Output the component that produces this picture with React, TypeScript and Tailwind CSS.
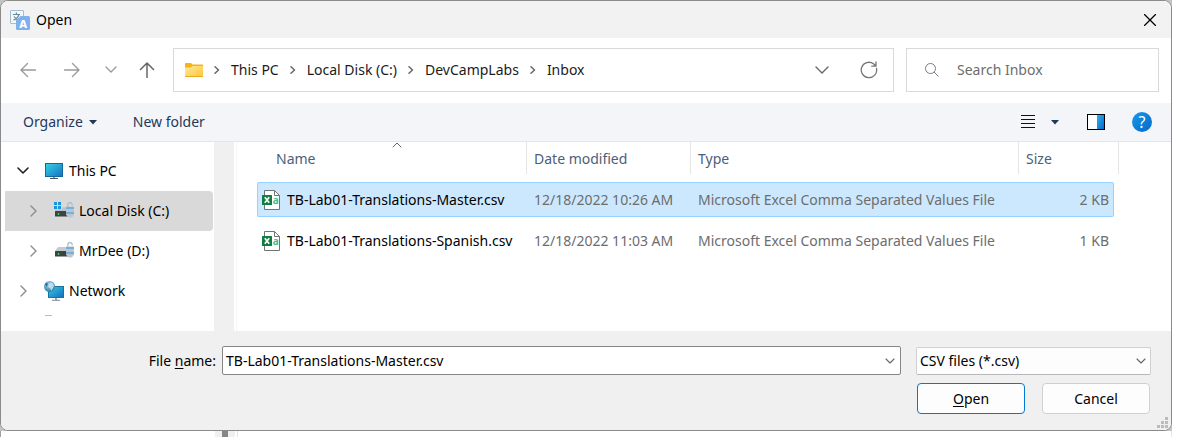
import React from "react";

type StrokeProps = { d: string; w?: number; h?: number; className?: string; stroke?: number };

function Stroke({ d, w = 12, h = 12, className = "", stroke = 1.4 }: StrokeProps) {
  return (
    <svg width={w} height={h} viewBox={`0 0 ${w} ${h}`} fill="none" stroke="currentColor" strokeWidth={stroke} strokeLinecap="round" strokeLinejoin="round" className={`shrink-0 ${className}`} aria-hidden="true">
      <path d={d} />
    </svg>
  );
}

function TranslateIcon() {
  return (
    <svg width="20" height="20" viewBox="0 0 20 20" className="shrink-0" aria-hidden="true">
      <rect x="0.5" y="0.5" width="13" height="13" rx="0.5" fill="#f1f7fb" stroke="#a4bccb" />
      <path d="M2.800 4.500h7.200M6.400 2.600v1.900M4 6.500c1 1.800 2.600 3 5 3.400M8.800 5c-.8 2.600-2.500 4-5.300 4.800" fill="none" stroke="#6a8799" strokeWidth="1.200" />
      <path d="M10.500 6h8a1.500 1.500 0 0 1 1.500 1.500v11a1.500 1.500 0 0 1-1.500 1.500h-11A1.500 1.500 0 0 1 6 18.500V10.500z" fill="#7fb0ee" />
      <text x="13.200" y="17.500" textAnchor="middle" fontSize="11" fontWeight="800" fontFamily="Noto Sans" fill="#fff">A</text>
    </svg>
  );
}

function FolderIcon() {
  return (
    <svg width="18" height="14" viewBox="0 0 18 14" className="shrink-0" aria-hidden="true">
      <defs>
        <linearGradient id="folder" x1="0" y1="0" x2="1" y2="1">
          <stop offset="0" stopColor="#ffe8a0" />
          <stop offset="1" stopColor="#fdc733" />
        </linearGradient>
      </defs>
      <path d="M0 1a1 1 0 0 1 1-1h5l1.500 1.500H17a1 1 0 0 1 1 1v3H0z" fill="#f5b316" />
      <path d="M0 4.500h5.500l2-1.500H17a1 1 0 0 1 1 1v9a1 1 0 0 1-1 1H1a1 1 0 0 1-1-1z" fill="url(#folder)" />
      <path d="M.3 13.500h17.400" stroke="#e8a91c" />
    </svg>
  );
}

function MonitorIcon() {
  return (
    <svg width="18" height="16" viewBox="0 0 18 16" className="shrink-0" aria-hidden="true">
      <defs>
        <linearGradient id="screen" x1="0" y1="0" x2="1" y2="1">
          <stop offset="0" stopColor="#35d5e4" />
          <stop offset="1" stopColor="#1570c4" />
        </linearGradient>
      </defs>
      <rect x="0.500" y="0.500" width="17" height="13" fill="url(#screen)" stroke="#14679c" />
      <path d="M8 14h2v1.500H8z" fill="#8b98a5" />
      <path d="M5 15.500h8" stroke="#4a5865" />
    </svg>
  );
}

function DriveIcon({ system = false }: { system?: boolean }) {
  return (
    <svg width="20" height="18" viewBox="0 0 20 18" className="shrink-0" aria-hidden="true">
      {system && <path d="M0 0h3v3H0zM4 0h3v3H4zM0 4h3v3H0zM4 4h3v3H4z" fill="#1a93dc" />}
      {system ? <path d="M8 5.500h6V9H1V7.500h7z" fill="#bcc2c7" /> : <path d="M4 5h10v4H1z" fill="#c5cace" />}
      <rect x="1" y="9" width="13" height="5.500" rx="0.500" fill="#3c4144" />
      <circle cx="4.500" cy="12" r="0.900" fill="#38e04b" />
      <path d="M13.800 4.500V2.700a2.200 2.200 0 0 1 4.400 0V3.500" fill="none" stroke="#a9bdcb" strokeWidth="1.300" />
      <path d="M12 4.500h8v8q-1 2.800-4 3.300-3-.5-4-3.300z" fill="#bac6d1" />
      <path d="M12 6h8M12 11h8" stroke="#3697dd" strokeWidth="1.100" />
    </svg>
  );
}

function NetworkIcon() {
  return (
    <svg width="20" height="20" viewBox="0 0 20 20" className="shrink-0" aria-hidden="true">
      <defs>
        <linearGradient id="netscreen" x1="0" y1="0" x2="1" y2="1">
          <stop offset="0" stopColor="#35cfe4" />
          <stop offset="1" stopColor="#146dbd" />
        </linearGradient>
        <radialGradient id="globe" cx="0.400" cy="0.300" r="0.700">
          <stop offset="0" stopColor="#a7d3e8" />
          <stop offset="1" stopColor="#2d7fae" />
        </radialGradient>
      </defs>
      <rect x="4.500" y="5.500" width="15" height="11" fill="url(#netscreen)" stroke="#1572a5" />
      <path d="M11 17h2v2h-2z" fill="#9aa6b0" />
      <path d="M8 19.300h8" stroke="#7f8b96" />
      <circle cx="5.500" cy="5.500" r="5.500" fill="url(#globe)" />
      <path d="M6 1.500l3 .5 1 3-1.500 3-1 2-1.500-3-2-1 1-2z" fill="#dcebf2" opacity="0.750" />
      <path d="M1 3l2-1.500 1 1.500-1.500 3z" fill="#2a7398" />
    </svg>
  );
}

function CsvIcon() {
  return (
    <svg width="18" height="20" viewBox="0 0 18 20" className="shrink-0" aria-hidden="true">
      <path d="M2.500.5h10l5 5v14h-15z" fill="#fff" stroke="#6f7573" />
      <path d="M12.500.5v5h5" fill="none" stroke="#6f7573" />
      <text x="10.800" y="14" fontSize="10" fontWeight="700" fontFamily="Noto Sans" fill="#43bd85">a</text>
      <rect x="0" y="5" width="10" height="10" rx="0.500" fill="#107c41" />
      <path d="M2.800 7.200l4.400 5.600M7.200 7.200l-4.400 5.600" stroke="#fff" strokeWidth="1.700" />
    </svg>
  );
}

const DOWN = "M1 1l5 5 5-5";
const RIGHT = "M1 1l5 5-5 5";

const path = ["This PC", "Local Disk (C:)", "DevCampLabs", "Inbox"];

const files = [
  { name: "TB-Lab01-Translations-Master.csv", date: "12/18/2022 10:26 AM", size: "2 KB", selected: true },
  { name: "TB-Lab01-Translations-Spanish.csv", date: "12/18/2022 11:03 AM", size: "1 KB", selected: false },
];

function NavBar() {
  return (
    <nav className="flex h-[65px] items-center bg-white pr-3 pb-[2px] pl-[19px] text-[#9b9b9b]">
      <button aria-label="Back" className="flex w-4"><Stroke w={16} h={16} d="M15.500 8H1M7.500 1.500L1 8l6.500 6.500" /></button>
      <button aria-label="Forward" className="ml-7 flex w-4"><Stroke w={16} h={16} d="M.5 8H15M8.500 1.500L15 8l-6.500 6.500" /></button>
      <button aria-label="Recent locations" className="ml-[25px] flex w-3"><Stroke w={12} h={8} d={DOWN} /></button>
      <button aria-label="Up" className="ml-[22px] flex w-4 text-[#666]"><Stroke w={16} h={16} d="M8 15.500V1M1.500 7.500L8 1l6.500 6.500" stroke={1.5} /></button>
      <div className="ml-[18px] flex h-11 min-w-0 flex-1 items-center border border-[#d9d9d9] px-[11px]">
        <FolderIcon />
        <ol className="flex flex-1 items-center text-[#1b1b1b]">
          {path.map((p) => (
            <li key={p} className="flex items-center">
              <Stroke w={6} h={8} d="M1 .8L4.500 4 1 7.200" stroke={1.5} className="mx-[11px] text-[#666]" />
              <a href="#">{p}</a>
            </li>
          ))}
        </ol>
        <button aria-label="Previous locations" className="flex text-[#666]"><Stroke w={14} h={8} d="M1 1l6 6 6-6" /></button>
        <button aria-label="Refresh" className="mr-1 ml-[31px] flex text-[#757575]">
          <Stroke w={18} h={18} d="M16.500 7.500A7.700 7.700 0 1 1 13.500 2.800L16 5M16 1v4.200h-4.200" stroke={1.3} />
        </button>
      </div>
      <label className="ml-3 flex h-11 w-[253px] items-center border border-[#d9d9d9] pl-[18px]">
        <svg width="14" height="14" viewBox="0 0 14 14" fill="none" stroke="#747b86" className="shrink-0" aria-hidden="true"><circle cx="5.500" cy="5.500" r="5" /><path d="M9 9l4.500 4.500" /></svg>
        <input type="search" aria-label="Search Inbox" placeholder="Search Inbox" className="ml-[18px] w-full min-w-0 outline-none placeholder:text-[#6d6d6d]" />
      </label>
    </nav>
  );
}

function Toolbar() {
  return (
    <div className="flex h-[39px] items-center border-b border-[#e5e5e5] bg-[#f4f5f8] pr-[19px] pl-[22px] text-[#1e395b]">
      <button className="flex items-center gap-[6px]">
        Organize
        <svg width="8" height="5" viewBox="0 0 8 5" aria-hidden="true"><path d="M0 0h8L4 4.500z" fill="#1e395b" /></svg>
      </button>
      <button className="ml-9">New folder</button>
      <span className="flex-1" />
      <button aria-label="View" className="flex"><svg width="14" height="14" viewBox="0 0 14 14" aria-hidden="true"><path d="M0 .5h14M0 4.500h14M0 8.500h14M0 12.500h14" stroke="#111" /></svg></button>
      <button aria-label="More views" className="ml-4 flex"><svg width="8" height="5" viewBox="0 0 8 5" aria-hidden="true"><path d="M0 0h8L4 4.500z" fill="#1e395b" /></svg></button>
      <button aria-label="Preview pane" className="ml-7 flex">
        <svg width="18" height="16" viewBox="0 0 18 16" aria-hidden="true">
          <defs><linearGradient id="pane" x1="0" y1="0" x2="1" y2="1"><stop offset="0" stopColor="#2ab4f0" /><stop offset="1" stopColor="#0868cc" /></linearGradient></defs>
          <rect x="0.500" y="0.500" width="17" height="15" fill="#fff" stroke="#000" />
          <path d="M10 1h7v14h-7z" fill="url(#pane)" />
        </svg>
      </button>
      <button aria-label="Help" className="ml-[27px] flex size-5 items-center justify-center rounded-full bg-linear-to-br from-[#1a9be6] to-[#0667cd] text-base leading-5 text-white">?</button>
    </div>
  );
}

function TreeRow({ label, icon, level = 0, open = false, selected = false }: { label: string; icon: React.ReactNode; level?: number; open?: boolean; selected?: boolean }) {
  return (
    <li className={`flex h-10 items-center rounded-r-sm ${level ? "pl-[22px]" : "pl-3"} ${selected ? "bg-[#d9d9d9]" : ""}`}>
      <button aria-label={`Toggle ${label}`} className={`flex w-3 justify-center ${open ? "text-[#222]" : "text-[#8c8c8c]"}`}>
        {open ? <Stroke w={12} h={8} d={DOWN} stroke={1.6} /> : <Stroke w={7} h={12} d={RIGHT} />}
      </button>
      <span className="ml-[15px] flex w-5 justify-center">{icon}</span>
      <span className="ml-[5px]">{label}</span>
    </li>
  );
}

function FileTable() {
  const head = "h-8 border-r border-[#e5e5e5] pl-[7px] pt-px leading-8";
  return (
    <table className="w-full table-fixed border-collapse">
      <thead>
        <tr className="text-left text-[#4c607a]">
          <th className="w-[270px] p-0 pb-2 font-normal">
            <div className="relative h-8 border-r border-[#e5e5e5] pt-px pl-[19px] leading-8">
              Name
              <Stroke w={10} h={6} d="M1 5l4-4 4 4" stroke={1} className="absolute top-0 left-[135px] text-[#666]" />
            </div>
          </th>
          <th className="w-[164px] p-0 pb-2 font-normal"><div className={head}>Date modified</div></th>
          <th className="p-0 pb-2 font-normal"><div className={head}>Type</div></th>
          <th className="w-[100px] p-0 pb-2 font-normal"><div className={head}>Size</div></th>
        </tr>
      </thead>
      <tbody className="text-[#6d6d6d]">
        {files.map((f) => {
          const cell = `flex h-[35px] items-center whitespace-nowrap border-y pt-px pl-[7px] ${f.selected ? "border-[#99d1ff] bg-[#cce8ff]" : "border-transparent"}`;
          return (
            <tr key={f.name} aria-selected={f.selected}>
              <td className="p-0 pb-[6px]">
                <div className={`${cell} rounded-l-xs border-l`}>
                  <span className="-ml-[3px] flex"><CsvIcon /></span>
                  <span className="ml-[7px] text-black">{f.name}</span>
                </div>
              </td>
              <td className="p-0 pb-[6px]"><div className={cell}>{f.date}</div></td>
              <td className="p-0 pb-[6px]"><div className={cell}>Microsoft Excel Comma Separated Values File</div></td>
              <td className="p-0 pr-[5px] pb-[6px]"><div className={`${cell} justify-end rounded-r-xs border-r pr-1`}>{f.size}</div></td>
            </tr>
          );
        })}
      </tbody>
    </table>
  );
}

function Footer() {
  return (
    <form className="h-[99px] bg-[#f0f0f0] pt-[15px] pr-5" onSubmit={(e) => e.preventDefault()}>
      <div className="flex items-center">
        <label htmlFor="filename" className="w-[221px] pr-[6px] text-right">File <u className="underline-offset-2">n</u>ame:</label>
        <div className="flex h-[29px] flex-1 items-center rounded-xs border border-[#868686] bg-white pr-[5px] pl-[3px]">
          <input id="filename" defaultValue="TB-Lab01-Translations-Master.csv" className="min-w-0 flex-1 outline-none" />
          <button type="button" aria-label="File name history" className="flex text-[#666]"><Stroke w={10} h={6} d="M1 1l4 4 4-4" stroke={1.1} /></button>
        </div>
        <div className="ml-[15px] grid w-[235px] items-center">
          <select aria-label="File type" className="col-start-1 row-start-1 h-7 appearance-none rounded-xs border border-[#d0d0d0] border-b-[#b8b8b8] bg-[#fdfdfd] pl-[3px]">
            <option>CSV files (*.csv)</option>
          </select>
          <Stroke w={10} h={6} d="M1 1l4 4 4-4" stroke={1.1} className="pointer-events-none col-start-1 row-start-1 mr-[5px] justify-self-end text-[#666]" />
        </div>
      </div>
      <div className="mt-2 flex justify-end gap-[17px] pr-[1px]">
        <button className="h-[31px] w-[108px] rounded border border-[#0078d4] bg-[#fdfdfd]"><u className="underline-offset-2">O</u>pen</button>
        <button type="button" className="h-[31px] w-[108px] rounded border border-[#d0d0d0] bg-[#fdfdfd]">Cancel</button>
      </div>
    </form>
  );
}

export default function App() {
  return (
    <div className="overflow-hidden bg-white font-['Noto_Sans',sans-serif] text-sm text-black">
      <div className="mr-2 bg-[#c4c4c4]">
        <main role="dialog" aria-label="Open" className="relative overflow-hidden rounded-lg border border-[#8a8a8a] bg-white">
          <header className="flex h-[37px] items-center bg-[#f2f2f2] pr-[15px] pl-[9px]">
            <TranslateIcon />
            <h1 className="ml-[6px] flex-1">Open</h1>
            <button aria-label="Close" className="flex"><Stroke w={12} h={12} d="M.5.5l11 11M11.500.5l-11 11" stroke={1.3} /></button>
          </header>
          <NavBar />
          <Toolbar />
          <div className="flex h-[189px]">
            <aside className="w-[213px] shrink-0 overflow-hidden pt-[9px] pr-[1px] pl-1">
              <ul>
                <TreeRow label="This PC" icon={<MonitorIcon />} open />
                <TreeRow label="Local Disk (C:)" icon={<DriveIcon system />} level={1} selected />
                <TreeRow label="MrDee (D:)" icon={<DriveIcon />} level={1} />
                <TreeRow label="Network" icon={<NetworkIcon />} />
              </ul>
              <div className="mt-1 ml-10 h-px w-[7px] bg-[#f5b92b]" />
            </aside>
            <div className="w-5 shrink-0 bg-[#f0f0f0]" />
            <section className="ml-[2px] min-w-0 flex-1 border-l border-[#f5f5f5] pr-[52px] pl-5">
              <FileTable />
            </section>
          </div>
          <Footer />
          <svg width="12" height="12" viewBox="0 0 12 12" className="absolute right-[2px] bottom-[1px]" fill="#bcbcbc" aria-hidden="true">
            <path d="M8 0h3v3H8zM4 4h3v3H4zM8 4h3v3H8zM0 8h3v3H0zM4 8h3v3H4zM8 8h3v3H8z" />
          </svg>
        </main>
      </div>
      <div className="flex h-[6px] border-l border-[#a0a0a0] pl-[214px]">
        <div className="flex w-5 justify-center bg-[#f0f0f0]"><div className="w-[6px] bg-[#868686]" /></div>
        <div className="mr-2 ml-[2px] flex-1 border-x border-[#e5e5e5]" />
      </div>
    </div>
  );
}
